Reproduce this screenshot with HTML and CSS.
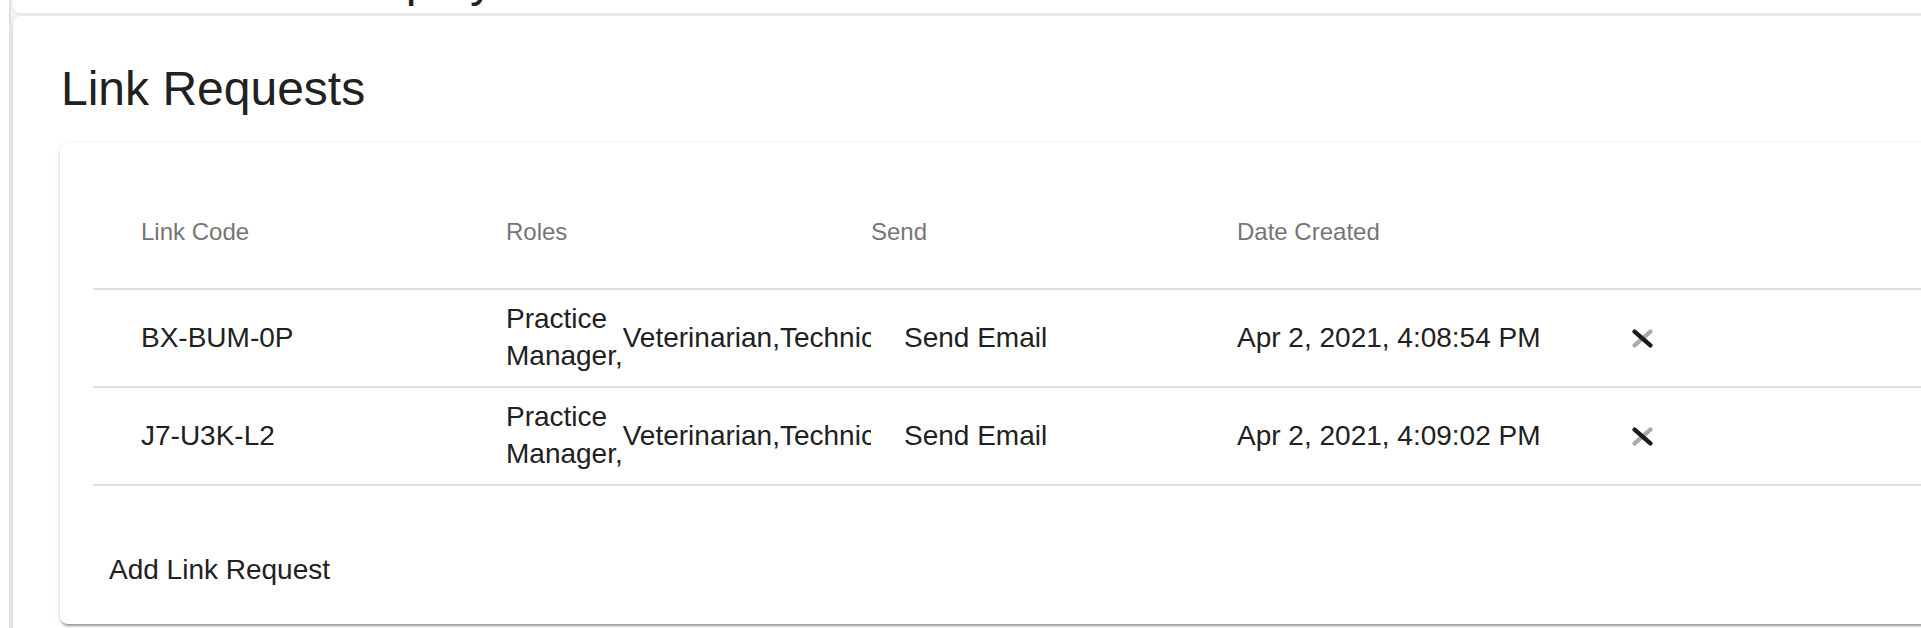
FILE: index.html
```html
<!DOCTYPE html>
<html lang="en">
<head>
<meta charset="utf-8">
<title>Link Requests</title>
<link rel="stylesheet" href="styles.css">
</head>
<body>
<div class="shell">
  <div class="gutter"></div>
  <div class="main">
    <div class="top-card"><div class="top-title">Veterinarian Display</div></div>
    <section class="panel">
      <h2 class="panel-title">Link Requests</h2>
      <div class="table-card">
        <div class="table">
          <div class="row head">
            <div class="cell c1">Link Code</div>
            <div class="cell">Roles</div>
            <div class="cell">Send</div>
            <div class="cell">Date Created</div>
            <div class="cell"></div>
          </div>
          <div class="row">
            <div class="cell c1">BX-BUM-0P</div>
            <div class="cell roles"><span class="role">Practice Manager,</span><span class="role">Veterinarian,</span><span class="role">Technician</span></div>
            <div class="cell"><button class="send-btn">Send Email</button></div>
            <div class="cell">Apr 2, 2021, 4:08:54 PM</div>
            <div class="cell icon-cell">
              <svg class="x-icon" width="21" height="19" viewBox="0 0 21 19"><line x1="2.6" y1="16.4" x2="18.4" y2="2.6" stroke="#ababab" stroke-width="4.4" stroke-linecap="round"/><line x1="2.6" y1="2.6" x2="18.4" y2="16.4" stroke="#1a1a1a" stroke-width="4.4" stroke-linecap="round"/></svg>
            </div>
          </div>
          <div class="row">
            <div class="cell c1">J7-U3K-L2</div>
            <div class="cell roles"><span class="role">Practice Manager,</span><span class="role">Veterinarian,</span><span class="role">Technician</span></div>
            <div class="cell"><button class="send-btn">Send Email</button></div>
            <div class="cell">Apr 2, 2021, 4:09:02 PM</div>
            <div class="cell icon-cell">
              <svg class="x-icon" width="21" height="19" viewBox="0 0 21 19"><line x1="2.6" y1="16.4" x2="18.4" y2="2.6" stroke="#ababab" stroke-width="4.4" stroke-linecap="round"/><line x1="2.6" y1="2.6" x2="18.4" y2="16.4" stroke="#1a1a1a" stroke-width="4.4" stroke-linecap="round"/></svg>
            </div>
          </div>
        </div>
        <div class="table-foot"><button class="add-btn">Add Link Request</button></div>
      </div>
    </section>
  </div>
</div>
</body>
</html>
```
FILE: styles.css
```css
html, body {
  margin: 0;
  padding: 0;
  background: #ffffff;
  overflow: hidden;
  font-family: "Liberation Sans", Arial, Helvetica, sans-serif;
}

.shell {
  display: flex;
  height: 628px;
}

.gutter {
  flex: none;
  width: 9px;
  background: #ffffff;
}

.main {
  flex: 1;
  min-width: 0;
  border-left: 2px solid #e0e0e0;
  background: #f5f5f5;
  padding-left: 2px;
  overflow: hidden;
}

.top-card {
  height: 13px;
  width: calc(100% + 200px);
  background: #ffffff;
  border-radius: 0 0 8px 8px;
  box-shadow: 0 2px 3px rgba(0, 0, 0, 0.06);
  overflow: hidden;
}

.top-title {
  font-size: 48px;
  line-height: 48px;
  margin-top: -44px;
  padding-left: 54px;
  color: #212121;
  white-space: nowrap;
}

.panel {
  margin-top: 3px;
  width: calc(100% + 200px);
  box-sizing: border-box;
  background: #ffffff;
  border-radius: 8px;
  box-shadow: 0 4px 2px -2px rgba(0, 0, 0, 0.2), 0 2px 2px 0 rgba(0, 0, 0, 0.14), 0 2px 6px 0 rgba(0, 0, 0, 0.12);
  padding: 41px 0 60px 47px;
}

.panel-title {
  margin: 0 0 22px;
  padding-left: 1px;
  font-size: 48px;
  font-weight: 400;
  line-height: 64px;
  color: #212121;
}

.table-card {
  background: #ffffff;
  border-radius: 8px;
  box-shadow: 0 4px 2px -2px rgba(0, 0, 0, 0.2), 0 2px 2px 0 rgba(0, 0, 0, 0.14), 0 2px 6px 0 rgba(0, 0, 0, 0.12);
  padding: 30px 0 17px 33px;
}

.row {
  display: grid;
  grid-template-columns: 413px 365px 366px 366px 1fr;
  align-items: center;
  height: 98px;
  box-sizing: border-box;
  border-bottom: 2px solid #e0e0e0;
  font-size: 28px;
  line-height: 1.32;
  color: #212121;
}

.row.head {
  height: 117px;
  font-size: 24px;
  line-height: 36px;
  color: #757575;
}

.row.head .cell {
  padding-top: 2px;
}

.cell {
  min-width: 0;
  white-space: nowrap;
}

.c1 {
  padding-left: 48px;
}

.roles {
  display: flex;
  align-items: center;
  overflow: hidden;
}

.role {
  flex: 0 1 auto;
  white-space: normal;
}

.send-btn,
.add-btn {
  background: none;
  border: 0;
  margin: 0;
  font-family: inherit;
  font-size: 28px;
  color: #212121;
  cursor: pointer;
}

.send-btn {
  padding: 0 0 0 33px;
  line-height: 1.32;
}

.icon-cell {
  display: flex;
  align-items: center;
  padding-left: 29px;
}

.x-icon {
  display: block;
}

.table-foot {
  padding: 47px 0 0 0;
}

.add-btn {
  padding: 12px 16px;
  line-height: 50px;
}
```
